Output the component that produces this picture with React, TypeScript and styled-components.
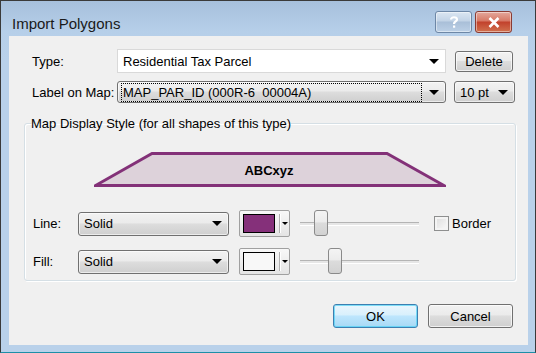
import React from "react";
import styled, { createGlobalStyle } from "styled-components";

const GlobalStyle = createGlobalStyle`
  html, body {
    margin: 0;
    padding: 0;
    background: #ffffff;
  }
  body {
    font-family: "Liberation Sans", Arial, sans-serif;
    font-size: 13px;
    color: #000;
  }
`;

const Window = styled.div`
  width: 536px;
  height: 353px;
  box-sizing: border-box;
  border: 1px solid #3a3a3a;
  border-bottom-color: #1d8fa8;
  background: linear-gradient(#a7c0dc 0px, #b6cfe9 30px, #b9d1ea 60px);
  display: flex;
  flex-direction: column;
  padding: 0 7px 7px 8px;
`;

const TitleBar = styled.div`
  height: 35px;
  display: flex;
  align-items: center;
  justify-content: space-between;
  padding: 0 16px 0 3px;
  box-sizing: border-box;
`;

const TitleText = styled.div`
  font-size: 15px;
  color: #1a1a1a;
  padding-top: 10px;
`;

const TitleButtons = styled.div`
  display: flex;
  gap: 3px;
  align-self: flex-start;
  margin-top: 10px;
`;

const CaptionButton = styled.div<{ $close?: boolean }>`
  width: 37px;
  height: 22px;
  box-sizing: border-box;
  border: 1px solid ${(p) => (p.$close ? "#8a3b33" : "#6d87a6")};
  border-radius: 3px;
  background: ${(p) =>
    p.$close
      ? "linear-gradient(#e4a89c 0%, #d77865 45%, #c2412c 50%, #d0714e 100%)"
      : "linear-gradient(#dbe6f2 0%, #c2d3e6 45%, #a9bfd8 50%, #bcd0e6 100%)"};
  display: flex;
  align-items: center;
  justify-content: center;
  box-shadow: inset 0 0 0 1px rgba(255, 255, 255, 0.45);
`;

const Client = styled.div`
  flex: 1;
  background: #f0f0f0;
  display: flex;
  flex-direction: column;
  padding: 13px 15px 0 23px;
  box-sizing: border-box;
`;

const Row = styled.div<{ $mt?: number }>`
  display: flex;
  align-items: center;
  margin-top: ${(p) => p.$mt ?? 0}px;
`;

const Label = styled.div<{ $w: number }>`
  width: ${(p) => p.$w}px;
  flex: none;
`;

const Combo = styled.div<{ $w: number; $h: number; $white?: boolean; $ml?: number }>`
  width: ${(p) => p.$w}px;
  height: ${(p) => p.$h}px;
  margin-left: ${(p) => p.$ml ?? 0}px;
  box-sizing: border-box;
  flex: none;
  display: flex;
  align-items: center;
  padding: 0 6px 0 4px;
  border: 1px solid ${(p) => (p.$white ? "#d9d9d9" : "#707070")};
  border-radius: ${(p) => (p.$white ? 0 : 3)}px;
  background: ${(p) =>
    p.$white ? "#ffffff" : "linear-gradient(#f2f2f2 0%, #ebebeb 45%, #dddddd 50%, #cfcfcf 100%)"};
  box-shadow: ${(p) => (p.$white ? "none" : "inset 0 0 0 1px rgba(255,255,255,0.6)")};
`;

const ComboText = styled.div<{ $focus?: boolean }>`
  flex: 1;
  white-space: nowrap;
  overflow: hidden;
  padding: 1px 1px;
  outline: ${(p) => (p.$focus ? "1px dotted #000" : "none")};
  margin-right: ${(p) => (p.$focus ? 2 : 0)}px;
`;

const Arrow = styled.div`
  width: 0;
  height: 0;
  border-left: 5px solid transparent;
  border-right: 5px solid transparent;
  border-top: 5px solid #000;
  flex: none;
  margin-left: 6px;
`;

const SmallArrow = styled.div`
  width: 0;
  height: 0;
  border-left: 3px solid transparent;
  border-right: 3px solid transparent;
  border-top: 3px solid #000;
`;

const PushButton = styled.button<{ $w: number; $h: number; $default?: boolean; $ml?: number }>`
  width: ${(p) => p.$w}px;
  height: ${(p) => p.$h}px;
  margin-left: ${(p) => p.$ml ?? 0}px;
  flex: none;
  font-family: "Liberation Sans", Arial, sans-serif;
  font-size: 13px;
  color: #000;
  padding: 0;
  border-radius: 3px;
  border: 1px solid ${(p) => (p.$default ? "#3c7fb1" : "#707070")};
  background: ${(p) =>
    p.$default
      ? "linear-gradient(#eaf6fd 0%, #d9f0fc 45%, #bee6fd 50%, #a7d9f5 100%)"
      : "linear-gradient(#f2f2f2 0%, #ebebeb 45%, #dddddd 50%, #cfcfcf 100%)"};
  box-shadow: inset 0 0 0 1px ${(p) => (p.$default ? "#48d0f5aa" : "rgba(255,255,255,0.7)")};
`;

const Group = styled.fieldset`
  margin: 13px 0 0 -8px;
  width: 492px;
  height: 165px;
  box-sizing: border-box;
  border: 1px solid #d5dfe5;
  border-radius: 3px;
  padding: 0 0 0 8px;
  display: flex;
  flex-direction: column;
  box-shadow: inset 1px 1px 0 #ffffff, 1px 1px 0 #ffffff;
`;

const Legend = styled.legend`
  padding: 0;
  margin-left: -2px;
`;

const Preview = styled.div`
  display: flex;
  justify-content: flex-start;
  margin-top: 21px;
  margin-left: 61px;
`;

const ColorButton = styled.div`
  width: 51px;
  height: 27px;
  box-sizing: border-box;
  margin-left: 10px;
  flex: none;
  border: 1px solid #a0a0a0;
  border-radius: 2px;
  background: linear-gradient(#f8f8f8, #e4e4e4);
  display: flex;
  align-items: stretch;
  padding: 3px 0 3px 3px;
`;

const Swatch = styled.div<{ $color: string }>`
  width: 32px;
  box-sizing: border-box;
  border: 1px solid #000;
  background: ${(p) => p.$color};
`;

const SwatchDrop = styled.div`
  flex: 1;
  margin-left: 4px;
  border-left: 1px solid #b0b0b0;
  box-shadow: inset 1px 0 0 #ffffff;
  display: flex;
  align-items: center;
  justify-content: center;
`;

const Slider = styled.div`
  width: 119px;
  height: 27px;
  margin-left: 10px;
  flex: none;
  display: flex;
  align-items: center;
  position: relative;
`;

const Track = styled.div`
  width: 100%;
  height: 2px;
  border-top: 1px solid #b4b4b4;
  border-bottom: 1px solid #ffffff;
  background: #e6e6e6;
`;

const Thumb = styled.div`
  position: absolute;
  top: 0;
  width: 14px;
  height: 26px;
  box-sizing: border-box;
  border: 1px solid #8a8a8a;
  border-radius: 3px;
  background: linear-gradient(#f4f4f4 0%, #ececec 45%, #dcdcdc 50%, #d2d2d2 100%);
`;

const CheckBox = styled.div`
  width: 15px;
  height: 15px;
  box-sizing: border-box;
  margin-left: 15px;
  border: 1px solid #8e8f8f;
  background: linear-gradient(135deg, #dcdcdc, #fbfbfb);
  box-shadow: inset 0 0 0 2px #f4f4f4;
  flex: none;
`;

const CheckLabel = styled.span`
  margin-left: 3px;
`;

const Footer = styled.div`
  display: flex;
  justify-content: flex-end;
  gap: 10px;
  margin-top: 23px;
`;

const trapezoid = (
  <svg width="352" height="35" viewBox="0 0 352 35">
    <polygon
      points="58,1.5 293,1.5 350,33.5 1.5,33.5"
      fill="#ddd2da"
      stroke="#833178"
      strokeWidth="3"
      strokeLinejoin="miter"
    />
    <text
      x="175"
      y="23"
      textAnchor="middle"
      fontFamily="Liberation Sans, Arial, sans-serif"
      fontWeight="bold"
      fontSize="13"
      fill="#000"
    >
      ABCxyz
    </text>
  </svg>
);

function ColorPicker({ color }: { color: string }) {
  return (
    <ColorButton>
      <Swatch $color={color} />
      <SwatchDrop>
        <SmallArrow />
      </SwatchDrop>
    </ColorButton>
  );
}

function TrackBar({ pos }: { pos: number }) {
  return (
    <Slider>
      <Track />
      <Thumb style={{ left: pos }} />
    </Slider>
  );
}

export default function App() {
  return (
    <>
      <GlobalStyle />
      <Window>
        <TitleBar>
          <TitleText>Import Polygons</TitleText>
          <TitleButtons>
            <CaptionButton>
              <svg width="10" height="14" viewBox="0 0 10 14">
                <path
                  d="M2 4.5 C2 1.5 8 1.5 8 4.5 C8 6.5 5 6.5 5 9"
                  fill="none"
                  stroke="#fff"
                  strokeWidth="2.2"
                />
                <rect x="4" y="10.5" width="2.2" height="2.2" fill="#fff" />
              </svg>
            </CaptionButton>
            <CaptionButton $close>
              <svg width="12" height="11" viewBox="0 0 12 11">
                <path d="M1.5 1 L10.5 10 M10.5 1 L1.5 10" stroke="#fff" strokeWidth="2.6" />
              </svg>
            </CaptionButton>
          </TitleButtons>
        </TitleBar>
        <Client>
          <Row>
            <Label $w={85}>Type:</Label>
            <Combo $w={329} $h={24} $white>
              <ComboText>Residential Tax Parcel</ComboText>
              <Arrow />
            </Combo>
            <PushButton $w={58} $h={21} $ml={9}>
              Delete
            </PushButton>
          </Row>
          <Row $mt={8}>
            <Label $w={85}>Label on Map:</Label>
            <Combo $w={329} $h={22}>
              <ComboText $focus>MAP_PAR_ID (000R-6&nbsp;&nbsp;00004A)</ComboText>
              <Arrow />
            </Combo>
            <Combo $w={61} $h={22} $ml={8}>
              <ComboText>10 pt</ComboText>
              <Arrow />
            </Combo>
          </Row>
          <Group>
            <Legend>Map Display Style (for all shapes of this type)</Legend>
            <Preview>{trapezoid}</Preview>
            <Row $mt={23}>
              <Label $w={45}>Line:</Label>
              <Combo $w={151} $h={24}>
                <ComboText>Solid</ComboText>
                <Arrow />
              </Combo>
              <ColorPicker color="#85307a" />
              <TrackBar pos={14} />
              <CheckBox />
              <CheckLabel>Border</CheckLabel>
            </Row>
            <Row $mt={11}>
              <Label $w={45}>Fill:</Label>
              <Combo $w={151} $h={24}>
                <ComboText>Solid</ComboText>
                <Arrow />
              </Combo>
              <ColorPicker color="#f8f8f8" />
              <TrackBar pos={28} />
            </Row>
          </Group>
          <Footer>
            <PushButton $w={85} $h={24} $default>
              OK
            </PushButton>
            <PushButton $w={85} $h={24}>
              Cancel
            </PushButton>
          </Footer>
        </Client>
      </Window>
    </>
  );
}
